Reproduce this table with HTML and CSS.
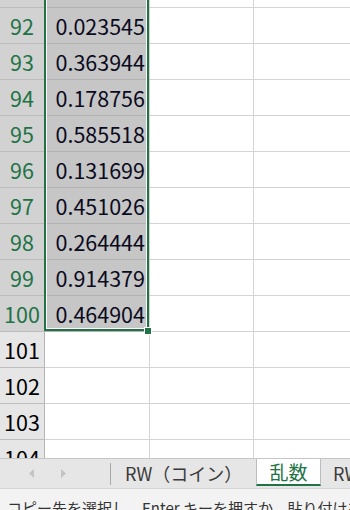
FILE: index.html
```html
<!DOCTYPE html>
<html lang="ja">
<head>
<meta charset="utf-8">
<link rel="stylesheet" href="styles.css">
</head>
<body>
<div class="sheet">
  <div class="rows">
    <div class="row sel"><div class="rh">91</div><div class="c a"></div><div class="c b"></div><div class="c cc"></div></div>
    <div class="row sel"><div class="rh">92</div><div class="c a">0.023545</div><div class="c b"></div><div class="c cc"></div></div>
    <div class="row sel"><div class="rh">93</div><div class="c a">0.363944</div><div class="c b"></div><div class="c cc"></div></div>
    <div class="row sel"><div class="rh">94</div><div class="c a">0.178756</div><div class="c b"></div><div class="c cc"></div></div>
    <div class="row sel"><div class="rh">95</div><div class="c a">0.585518</div><div class="c b"></div><div class="c cc"></div></div>
    <div class="row sel"><div class="rh">96</div><div class="c a">0.131699</div><div class="c b"></div><div class="c cc"></div></div>
    <div class="row sel"><div class="rh">97</div><div class="c a">0.451026</div><div class="c b"></div><div class="c cc"></div></div>
    <div class="row sel"><div class="rh">98</div><div class="c a">0.264444</div><div class="c b"></div><div class="c cc"></div></div>
    <div class="row sel"><div class="rh">99</div><div class="c a">0.914379</div><div class="c b"></div><div class="c cc"></div></div>
    <div class="row sel last"><div class="rh">100</div><div class="c a">0.464904</div><div class="c b"></div><div class="c cc"></div></div>
    <div class="row"><div class="rh">101</div><div class="c a"></div><div class="c b"></div><div class="c cc"></div></div>
    <div class="row"><div class="rh">102</div><div class="c a"></div><div class="c b"></div><div class="c cc"></div></div>
    <div class="row"><div class="rh">103</div><div class="c a"></div><div class="c b"></div><div class="c cc"></div></div>
    <div class="row"><div class="rh">104</div><div class="c a"></div><div class="c b"></div><div class="c cc"></div></div>
  </div>
  <div class="selection"></div>
  <div class="handle"></div>
</div>
<div class="tabbar">
  <div class="nav">
    <svg class="arrow" width="6" height="9" viewBox="0 0 6 9"><polygon points="5,0 5,9 0,4.5"/></svg>
    <svg class="arrow" width="6" height="9" viewBox="0 0 6 9"><polygon points="1,0 1,9 6,4.5"/></svg>
  </div>
  <div class="sep"></div>
  <div class="tab tab-rw">RW（コイン）</div>
  <div class="tab active">乱数</div>
  <div class="tab">RW</div>
</div>
<div class="status">コピー先を選択し、Enter キーを押すか、貼り付けを選択します。</div>
</body>
</html>
```
FILE: styles.css
```css
* { box-sizing: border-box; }
body {
  margin: 0;
  width: 350px;
  height: 510px;
  overflow: hidden;
  background: #fff;
  font-family: "Noto Sans CJK JP", "Liberation Sans", sans-serif;
}
.sheet {
  position: relative;
  height: 458px;
  overflow: hidden;
}
.rows { margin-top: -28px; }
.row {
  display: flex;
  height: 36px;
}
.rh {
  width: 45px;
  flex: none;
  background: #e6e6e6;
  border-right: 1px solid #b4b4b4;
  border-bottom: 1px solid #bdbdbd;
  text-align: center;
  font-size: 21.5px;
  line-height: 35px;
  color: #000;
}
.c {
  border-right: 1px solid #d4d4d4;
  border-bottom: 1px solid #d4d4d4;
  font-size: 21.5px;
  line-height: 35px;
  text-align: right;
  padding-right: 4px;
  color: #0b0b1e;
}
.a { width: 105px; flex: none; }
.b { width: 104px; flex: none; }
.cc { flex: 1; border-right: none; }
.sel .rh {
  background: #d2d2d2;
  color: #217346;
  border-bottom-color: #bcbcbc;
}
.sel .a {
  background: #c6c6c6;
  border-bottom-color: #b2b2b2;
}
.selection {
  position: absolute;
  left: 44px;
  top: -10px;
  width: 105px;
  height: 341px;
  border: 2px solid #217346;
  box-shadow: inset 0 0 0 1px #fff;
}
.handle {
  position: absolute;
  left: 144px;
  top: 327px;
  width: 8px;
  height: 8px;
  background: #217346;
  border: 1px solid #fff;
}
.tabbar {
  height: 30px;
  display: flex;
  align-items: stretch;
  background: #e6e6e6;
  border-top: 1px solid #c6c6c6;
  overflow: hidden;
}
.nav {
  width: 110px;
  flex: none;
  display: flex;
  align-items: center;
  gap: 25px;
  padding-left: 29px;
}
.arrow { fill: #c4c4c4; display: block; }
.sep {
  width: 1px;
  flex: none;
  align-self: center;
  height: 22px;
  background: #a8a8a8;
}
.tab {
  flex: none;
  font-size: 18px;
  line-height: 28px;
  color: #3a3a3a;
  padding: 0 12px;
  white-space: nowrap;
}
.tab-rw {
  width: 145px;
  padding-left: 14px;
}
.tab.active {
  width: 65px;
  margin-top: -1px;
  height: 28px;
  background: #fff;
  color: #217346;
  border-left: 1px solid #bdbdbd;
  border-right: 1px solid #bdbdbd;
  border-bottom: 2px solid #217346;
  text-align: center;
  line-height: 27px;
  padding: 0;
  font-size: 19px;
}
.status {
  height: 40px;
  background: #f3f3f3;
  border-top: 1px solid #d6d6d6;
  font-size: 15px;
  line-height: 20px;
  padding: 9px 0 0 7px;
  color: #333;
  white-space: nowrap;
  overflow: hidden;
}
```
